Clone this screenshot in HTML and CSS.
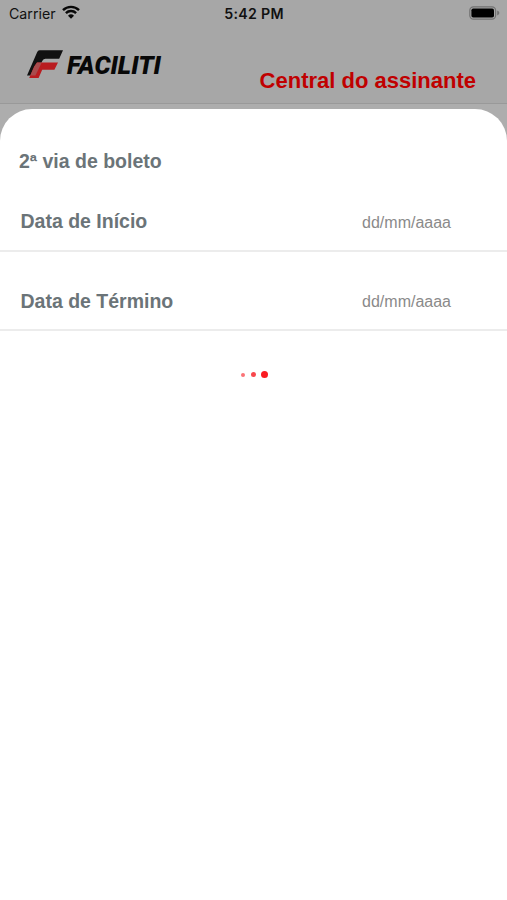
FILE: index.html
```html
<!DOCTYPE html>
<html lang="pt-BR">
<head>
  <meta charset="UTF-8">
  <title>Faciliti - Central do assinante</title>
  <link rel="stylesheet" href="styles.css">
</head>
<body>

  <div class="status-bar">
    <div class="carrier">
      <span>Carrier</span>
      <svg class="wifi" width="18" height="14" viewBox="0 0 18 14">
        <path d="M1 5.2a11.3 11.3 0 0 1 16 0M3.9 8.1a7.2 7.2 0 0 1 10.2 0" fill="none" stroke="#080808" stroke-width="2.4"/>
        <path d="M9 13.8l-3-3a4.3 4.3 0 0 1 6 0z" fill="#080808"/>
      </svg>
    </div>
    <div class="time">5:42 PM</div>
    <svg class="battery" width="31" height="14" viewBox="0 0 31 14">
      <rect x=".8" y=".8" width="25.8" height="12.4" rx="3.6" fill="none" stroke="#727272" stroke-width="1.2"/>
      <rect x="2.4" y="2.4" width="22.6" height="9.2" rx="1.8" fill="#000"/>
      <path d="M28.2 4.6q2.2 1 2.2 2.4t-2.2 2.4z" fill="#727272"/>
    </svg>
  </div>

  <header class="header">
    <svg class="logo" width="138" height="32" viewBox="0 0 138 32">
      <path d="M13.6 2.2H37l-3.8 8.6H19.4q-2 0-3 2L8.6 27.6H1L11 4.4q.8-2.2 2.6-2.2z" fill="#111"/>
      <path d="M11 14.6H32l-3.6 7.2H16.2L12.6 30H3.2l5-11.6z" fill="#b91c20"/>
      <path d="M11 14.6h4.8L9.4 27.6H4.2l4-9.2z" fill="#a94b4d"/>
      <text class="logo-text" x="41" y="25.8" textLength="94" lengthAdjust="spacingAndGlyphs">FACILITI</text>
    </svg>
    <h1 class="header-title">Central do assinante</h1>
  </header>

  <main class="sheet">
    <h2 class="sheet-title">2ª via de boleto</h2>
    <div class="field">
      <span class="label">Data de Início</span>
      <span class="date">dd/mm/aaaa</span>
    </div>
    <div class="field field-end">
      <span class="label">Data de Término</span>
      <span class="date">dd/mm/aaaa</span>
    </div>
    <div class="loading">
      <span class="dot dot-small"></span>
      <span class="dot dot-medium"></span>
      <span class="dot dot-large"></span>
    </div>
  </main>

</body>
</html>
```
FILE: styles.css
```css
* {
  box-sizing: border-box;
}

body {
  margin: 0;
  height: 900px;
  display: flex;
  flex-direction: column;
  overflow: hidden;
  background: #adadad;
  font-family: "Liberation Sans", Arial, sans-serif;
}

.status-bar {
  display: grid;
  grid-template-columns: 1fr auto 1fr;
  align-items: center;
  height: 28px;
  padding: 0 7px 2px 9px;
  background: #a7a7a7;
  font-family: Inter, sans-serif;
  font-size: 14.2px;
  color: #111;
}

.carrier {
  display: flex;
  align-items: center;
  gap: 6px;
}

.wifi {
  margin-top: -2px;
}

.time {
  margin-right: 1px;
  font-weight: 600;
  letter-spacing: 0.3px;
}

.battery {
  justify-self: end;
}

.header {
  display: flex;
  justify-content: space-between;
  height: 76px;
  padding: 20px 31px 0 26px;
  background: #a7a7a7;
  border-bottom: 1px solid #999;
}

.logo-text {
  font-family: Roboto, sans-serif;
  font-size: 25.6px;
  font-weight: 900;
  font-style: italic;
  fill: #080808;
}

.header-title {
  margin: 20px 0 0;
  font-size: 22px;
  line-height: 25px;
  color: #c00000;
}

.sheet {
  flex: 1;
  margin-top: 5px;
  padding-top: 41px;
  background: #fff;
  border-radius: 32px 32px 0 0;
}

.sheet-title {
  margin: 0 0 0 19px;
  font-size: 19.5px;
  line-height: 22px;
  color: #6b7478;
}

.field {
  display: flex;
  justify-content: space-between;
  align-items: center;
  height: 80px;
  padding: 21px 56px 0 20.5px;
  border-bottom: 2px solid #ececec;
}

.field-end {
  height: 79px;
}

.label {
  font-size: 19.5px;
  font-weight: bold;
  color: #6b7478;
}

.date {
  margin-top: 2px;
  font-size: 16px;
  color: #8a8a8a;
}

.loading {
  display: flex;
  justify-content: center;
  align-items: center;
  height: 7px;
  margin: 40px 0 0 2px;
  gap: 6px;
}

.dot {
  border-radius: 50%;
}

.dot-small {
  width: 4px;
  height: 4px;
  background: #fb7377;
}

.dot-medium {
  width: 5px;
  height: 5px;
  background: #f8474c;
}

.dot-large {
  width: 7px;
  height: 7px;
  margin-left: -1px;
  background: #fa1c22;
}
```
